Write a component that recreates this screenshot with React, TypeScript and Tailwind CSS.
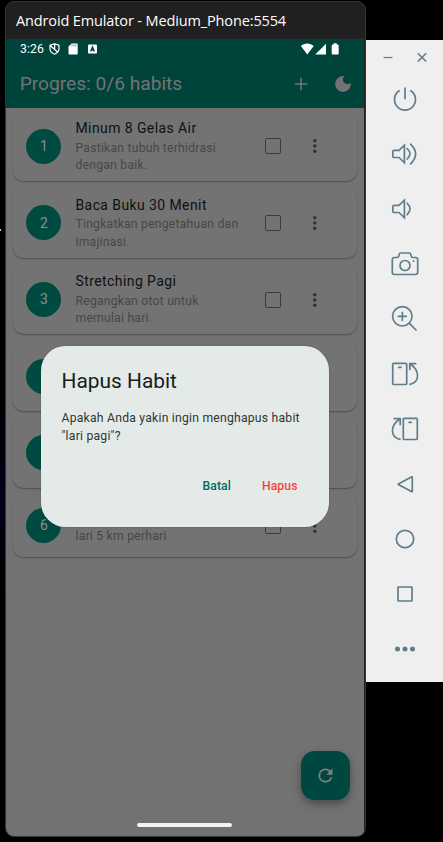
import type { ReactNode } from "react";

type Habit = { title?: string; lines: string[]; covered?: boolean };

const habits: Habit[] = [
  { title: "Minum 8 Gelas Air", lines: ["Pastikan tubuh terhidrasi", "dengan baik."] },
  { title: "Baca Buku 30 Menit", lines: ["Tingkatkan pengetahuan dan", "imajinasi."] },
  { title: "Stretching Pagi", lines: ["Regangkan otot untuk", "memulai hari."] },
  { lines: [], covered: true },
  { lines: [], covered: true },
  { lines: ["lari 5 km perhari"] },
];

function StatusBar() {
  return (
    <div className="flex h-5 items-center pl-[14px] text-white">
      <span className="w-[28.500px] text-[12.2px] leading-5 tracking-[0.1px]">3:26</span>
      <svg className="h-3 w-3" viewBox="0 0 12 12" fill="none" stroke="currentColor" strokeWidth="1.2">
        <path d="M5.5.9 10 2.3v3.4c0 2.5-1.8 4.3-4.5 5.5C2.800 10 1 8.200 1 5.700V2.300zM1.200 2.500l7.600 6.800M5.700 1v4.700" />
      </svg>
      <svg className="ml-[7px] h-3 w-3" viewBox="0 0 12 12" fill="currentColor">
        <path d="M3.600.5h5.200q.9 0 .9.9v9.200q0 .9-.9.9H1.400q-.9 0-.9-.9V3.600z" />
        <path d="M4 1.500v1.800M5.900 1.500v1.800M7.800 1.500v1.800" stroke="#00433b" strokeWidth=".6" />
      </svg>
      <svg className="ml-[7px] h-3 w-3" viewBox="0 0 12 12">
        <rect x="1" y="1.500" width="9" height="9" rx="1" fill="currentColor" />
        <path d="M3.600 8.500 5.500 3.900 7.400 8.500M4.200 7h2.600" fill="none" stroke="#00433b" strokeWidth="1.300" />
      </svg>
      <svg className="ml-auto mr-6 h-3 w-10" viewBox="0 0 40 12" fill="currentColor">
        <path d="M.9 3.100C4.200-.4 10.400-.4 13.700 3.100L7.300 11.400zM26 .7v10.700H15.200z" />
        <path d="M33.700.3h3v1.200h1q1 0 1 1v8q0 1-1 1h-5q-1 0-1-1v-8q0-1 1-1h1z" />
      </svg>
    </div>
  );
}

function AppBar() {
  return (
    <div className="flex h-[49px] items-center pl-[13.700px] text-[#737373]">
      <h1 className="text-[19.160px] leading-6">Progres: 0/6 habits</h1>
      <svg className="ml-auto h-5 w-5" viewBox="0 0 20 20" fill="none" stroke="currentColor" strokeWidth="1.500">
        <path d="M10 3.800v12.400M3.800 10h12.400" />
      </svg>
      <svg className="ml-[22px] mr-[11px] h-5 w-5" viewBox="0 0 24 24" fill="currentColor">
        <path d="M12 2.500a9.500 9.500 0 1 0 9.500 9.500c0-.5 0-1-.1-1.400a5.600 5.600 0 1 1-8-8c-.4-.1-.9-.1-1.400-.1z" />
      </svg>
    </div>
  );
}

function HabitCard({ habit, index }: { habit: Habit; index: number }) {
  return (
    <li
      className={`flex items-center rounded-[10.5px] bg-[#737373] pl-[13.900px] shadow-[0_1px_1.5px_rgba(0,0,0,0.32)] ${
        habit.lines.length === 1 ? "h-[62.600px]" : "h-[69.600px]"
      }`}
    >
      <span className="flex size-[35px] items-center justify-center rounded-full bg-[#004b41] text-[13.940px] text-[#8c8c8c]">
        {!habit.covered && index + 1}
      </span>
      <div className="ml-[14.100px] w-[189.500px] whitespace-nowrap">
        <div className="h-[21.500px] text-[13.94px] leading-[20.500px] tracking-[0.44px] text-[#101010]">
          {habit.title}
        </div>
        {habit.lines.map((line) => (
          <div key={line} className="text-[12.2px] leading-[17.4px] tracking-[0.22px] text-[#474747]">
            {line}
          </div>
        ))}
      </div>
      <span className="size-4 rounded-[2px] border-[1.500px] border-[#3b3b3b]" />
      <svg className="ml-[29px] h-4 w-2" viewBox="0 0 8 16" fill="#343434">
        <circle cx="4.800" cy="2.800" r="1.800" />
        <circle cx="4.800" cy="8" r="1.800" />
        <circle cx="4.800" cy="13.200" r="1.800" />
      </svg>
    </li>
  );
}

function DeleteDialog() {
  return (
    <div className="absolute left-[34.500px] top-[307px] h-[181px] w-[288.500px] rounded-[24.400px] bg-[#e4eae8] px-[21px] pt-[21px] text-[#171d1b] shadow-[0_0_2px_rgba(0,0,0,0.25)]">
      <h2 className="text-[20.900px] leading-7">Hapus Habit</h2>
      <p className="mt-[15.200px] whitespace-nowrap text-[12.200px] leading-[17.400px] tracking-[0.220px] text-[#303735]">
        Apakah Anda yakin ingin menghapus habit
        <br />
        "lari pagi"?
      </p>
      <div className="mr-[10.500px] mt-[32.500px] flex justify-end gap-[31px] text-[12.200px] font-medium leading-[17.400px] tracking-[0.090px]">
        <button className="text-[#006b5f]">Batal</button>
        <button className="text-[#f44336]">Hapus</button>
      </div>
    </div>
  );
}

const speaker = (
  <path d="M4 11.300h5L14.400 6.200v17.600l-5.400-5.300H4q-1.200 0-1.200-1.200v-4.800q0-1.200 1.200-1.200z" strokeLinejoin="miter" />
);

const toolIcons: ReactNode[] = [
  <path d="M9.200 6.800a10.500 10.500 0 1 0 11.600 0M15 4v10.500" />,
  <>
    {speaker}
    <path d="M17.200 9.600q5.600 5.200 0 10.400M20.600 5.200q10 9.800 0 19.600" />
  </>,
  <>
    {speaker}
    <path d="M17.200 9.400q5.600 5.600 0 11.200" />
  </>,
  <>
    <path d="M4.500 8.500H7q1.300 0 1.700-1.300L9.500 4.800q.3-.8 1.200-.8h8.600q.9 0 1.200.8l.8 2.400q.4 1.300 1.700 1.300h2.500q2.200 0 2.200 2.200v12.600q0 2.200-2.200 2.200h-21q-2.200 0-2.200-2.200V10.700q0-2.200 2.200-2.200z" />
    <circle cx="15" cy="16.500" r="5" />
    <path d="M23.500 12.200h.3" />
  </>,
  <>
    <circle cx="12.300" cy="12.300" r="9.700" />
    <path d="M12.300 8.300v8M8.300 12.300h8M19.200 19.200l6.800 6.800" />
  </>,
  <>
    <rect x="2.700" y="4.300" width="14" height="21.200" rx="1" />
    <path d="M8.700 8.300h2.300M19.800 10.500V4.600h6M20.200 5c9.800 6.500 9.800 18-.2 20.300" />
  </>,
  <>
    <rect x="13.300" y="4.300" width="14" height="21.200" rx="1" />
    <path d="M19 8.300h2.300M10.200 10.500V4.600h-6M9.800 5c-9.800 6.500-9.800 18 .2 20.300" />
  </>,
  <path d="M22.300 8v14.500q0 .4-.4.200L8.300 15.500q-.4-.2 0-.5L21.900 7.800q.4-.2.400.2z" />,
  <circle cx="15" cy="15" r="8.700" />,
  <rect x="8" y="8" width="14" height="14" rx=".6" />,
  <g fill="currentColor" stroke="none">
    <circle cx="7.500" cy="15" r="2.500" />
    <circle cx="15" cy="15" r="2.500" />
    <circle cx="22.500" cy="15" r="2.500" />
  </g>,
];

function Toolbar() {
  return (
    <aside className="mt-10 h-[642px] w-[77px] bg-[#efefef] text-[#5f7d8b]">
      <div className="flex h-[31.500px] items-center justify-end gap-[24px] pr-4 pt-[3px]">
        <svg className="h-[10px] w-[10px]" viewBox="0 0 10 10" stroke="currentColor" strokeWidth="1.200">
          <path d="M.5 5.500h9" />
        </svg>
        <svg className="h-[10px] w-[10px]" viewBox="0 0 10 10" stroke="currentColor" strokeWidth="1.500">
          <path d="M.8 1.200 9.200 9.600M9.200 1.200.8 9.600" />
        </svg>
      </div>
      {toolIcons.map((icon, i) => (
        <div key={i} className="flex h-[55px] items-center justify-center">
          <svg
            className="h-[30px] w-[30px]"
            viewBox="0 0 30 30"
            fill="none"
            stroke="currentColor"
            strokeWidth="1.700"
            strokeLinecap="round"
            strokeLinejoin="round"
          >
            {icon}
          </svg>
        </div>
      ))}
    </aside>
  );
}

export default function App() {
  return (
    <div className="flex h-[842px] w-[443px] overflow-hidden bg-black font-['Roboto',sans-serif]">
      <div className="h-full w-[5px] shrink-0 bg-linear-to-b from-black from-35% via-[#04001a] via-60% to-black to-75%">
        <div className="mt-[229px] h-[2px] w-[1px] bg-[#cccccc]" />
      </div>
      <main className="mt-[1px] h-[836px] w-[361px] shrink-0 overflow-hidden rounded-[9px] border border-[#343434] bg-[#202020]">
        <header className="flex h-[37px] items-center pl-[10px] font-['Open_Sans',sans-serif] text-[14.500px] text-white">
          <span className="whitespace-nowrap tracking-[-0.130px]">Android Emulator - Medium_Phone:5554</span>
        </header>
        <section className="relative flex h-[797px] w-[358px] flex-col bg-[#727272]">
          <div className="h-[68.600px] shrink-0 bg-[#00433b]">
            <StatusBar />
            <AppBar />
          </div>
          <ul className="flex flex-col gap-[7px] pl-[6.500px] pr-[7.500px] pt-[4px]">
            {habits.map((habit, index) => (
              <HabitCard key={index} habit={habit} index={index} />
            ))}
          </ul>
          <div className="mb-[36px] mr-[14.500px] mt-auto flex size-[49px] items-center justify-center self-end rounded-[14px] bg-[#00483f] text-[#808080] shadow-[0_4px_8px_rgba(0,0,0,0.35)]">
            <svg className="h-[21px] w-[21px]" viewBox="0 0 24 24" fill="currentColor">
              <path d="M17.650 6.350A7.958 7.958 0 0 0 12 4a8 8 0 1 0 7.730 10h-2.080A6 6 0 1 1 12 6c1.660 0 3.140.69 4.220 1.780L13 11h7V4z" />
            </svg>
          </div>
          <DeleteDialog />
          <div className="absolute bottom-[9px] left-[131px] h-[4px] w-[95px] rounded-full bg-[#f4f4f4]" />
        </section>
      </main>
      <Toolbar />
    </div>
  );
}
